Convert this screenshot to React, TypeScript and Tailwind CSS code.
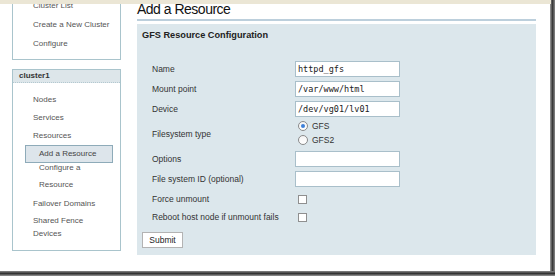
const navFont = { fontFamily: '"Liberation Sans", Arial, sans-serif' };
const monoFont = { fontFamily: '"DejaVu Sans Mono", "Liberation Mono", monospace' };

function TextInput({ value }: { value?: string }) {
  return (
    <div
      className="w-[105px] h-[16px] bg-white border border-[#a9bfca] flex items-center pl-[2px] text-[8.5px] text-[#222]"
      style={monoFont}
    >
      {value}
    </div>
  );
}

function Radio({ checked, label }: { checked?: boolean; label: string }) {
  return (
    <div className="h-[14px] flex items-center">
      <span className="ml-[3px] w-[10px] h-[10px] rounded-full border border-[#8a8a8a] bg-linear-to-b from-[#f4f4f4] to-white flex items-center justify-center">
        {checked && <span className="w-[4px] h-[4px] rounded-full bg-[#3d80d8]" />}
      </span>
      <span className="ml-[4px] text-[8.5px] text-[#333]">{label}</span>
    </div>
  );
}

function Checkbox() {
  return <span className="ml-[3px] w-[9px] h-[9px] bg-white border border-[#8f8f8f] block" />;
}

function Row({ label, h, children }: { label: string; h: string; children: React.ReactNode }) {
  return (
    <div className={`flex items-center ${h}`}>
      <div className="w-[143px] text-[8.5px] text-[#333]">{label}</div>
      <div>{children}</div>
    </div>
  );
}

function NavItem({ children }: { children: React.ReactNode }) {
  return <div className="h-[18px] flex items-center pl-[20px] text-[8px] text-[#555]">{children}</div>;
}

export default function App() {
  return (
    <div className="relative w-[557px] h-[278px] bg-white overflow-hidden" style={navFont}>
      <div className="absolute top-0 left-0 w-[551px] h-[4px] bg-[#ebe6d5] z-10" />
      <div className="flex h-[271px]">
        <div className="w-[550px] flex overflow-hidden">
          {/* sidebar */}
          <div className="ml-[12px] w-[109px] -mt-[4px] flex flex-col">
            <div className="border border-t-0 border-[#a9c4cc] pb-[6px]">
              <div className="h-[19px] flex items-center pl-[20px] text-[8px] text-[#555]">Cluster List</div>
              <div className="h-[19px] flex items-center pl-[20px] text-[8px] text-[#555]">Create a New Cluster</div>
              <div className="h-[19px] flex items-center pl-[20px] text-[8px] text-[#555]">Configure</div>
            </div>
            <div className="mt-[9px] border border-[#a9c4cc] pb-[10px]">
              <div className="h-[13px] bg-[#dde6ea] border-b border-dotted border-[#b3c8d0] flex items-center pl-[6px] text-[8px] font-bold text-[#333]">
                cluster1
              </div>
              <div className="pt-[8px]">
                <NavItem>Nodes</NavItem>
                <NavItem>Services</NavItem>
                <NavItem>Resources</NavItem>
                <div className="ml-[12px] w-[88px] h-[18px] border border-[#8eabb9] bg-[#dde5eb] flex items-center pl-[13px] text-[8px] text-[#444]">
                  Add a Resource
                </div>
                <div className="-mt-[4px] pl-[26px] leading-[17px] text-[8px] text-[#555]">
                  Configure a
                  <br />
                  Resource
                </div>
                <div className="mt-[2px]">
                  <NavItem>Failover Domains</NavItem>
                </div>
                <div className="mt-[1px] pl-[20px] leading-[13px] text-[8px] text-[#555]">
                  Shared Fence
                  <br />
                  Devices
                </div>
              </div>
            </div>
          </div>

          {/* main */}
          <div className="ml-[16px] w-[399px] flex flex-col">
            <div className="h-[21px] border-b-2 border-[#bccfdc] flex items-center text-[14px] tracking-[-0.5px] text-[#111]">
              Add a Resource
            </div>
            <div className="mt-[3px] h-[231px] bg-[#dce7ec] flex flex-col">
              <div className="pl-[5px] pt-[6px] h-[17px] flex items-center text-[9.2px] font-bold text-[#222]">
                GFS Resource Configuration
              </div>
              <div className="mt-[18px] pl-[15px] flex flex-col">
                <Row label="Name" h="h-[20px]">
                  <TextInput value="httpd_gfs" />
                </Row>
                <Row label="Mount point" h="h-[20px]">
                  <TextInput value="/var/www/html" />
                </Row>
                <Row label="Device" h="h-[20px]">
                  <TextInput value="/dev/vg01/lv01" />
                </Row>
                <div className="flex items-center h-[30px]">
                  <div className="w-[143px] text-[8.5px] text-[#333]">Filesystem type</div>
                  <div className="flex flex-col h-[30px]">
                    <Radio checked label="GFS" />
                    <Radio label="GFS2" />
                  </div>
                </div>
                <Row label="Options" h="h-[20px]">
                  <TextInput />
                </Row>
                <Row label="File system ID (optional)" h="h-[20px]">
                  <TextInput />
                </Row>
                <div className="mt-[1px]">
                  <Row label="Force unmount" h="h-[18px]">
                    <Checkbox />
                  </Row>
                  <Row label="Reboot host node if unmount fails" h="h-[18px]">
                    <Checkbox />
                  </Row>
                </div>
              </div>
              <div className="mt-[6px] pl-[5px]">
                <button className="w-[41px] h-[16px] bg-white border border-[#b3b3b3] text-[8.5px] text-[#222] flex items-center justify-center">
                  Submit
                </button>
              </div>
            </div>
          </div>
        </div>
        <div className="w-[5px] bg-linear-to-r from-[#a0a0a0] via-[#3a3a3a] to-[#8a8a8a]" />
      </div>
      <div className="w-[555px] h-[5px] bg-linear-to-b from-[#8a8a8a] via-[#333] to-[#9a9a9a]" />
    </div>
  );
}
